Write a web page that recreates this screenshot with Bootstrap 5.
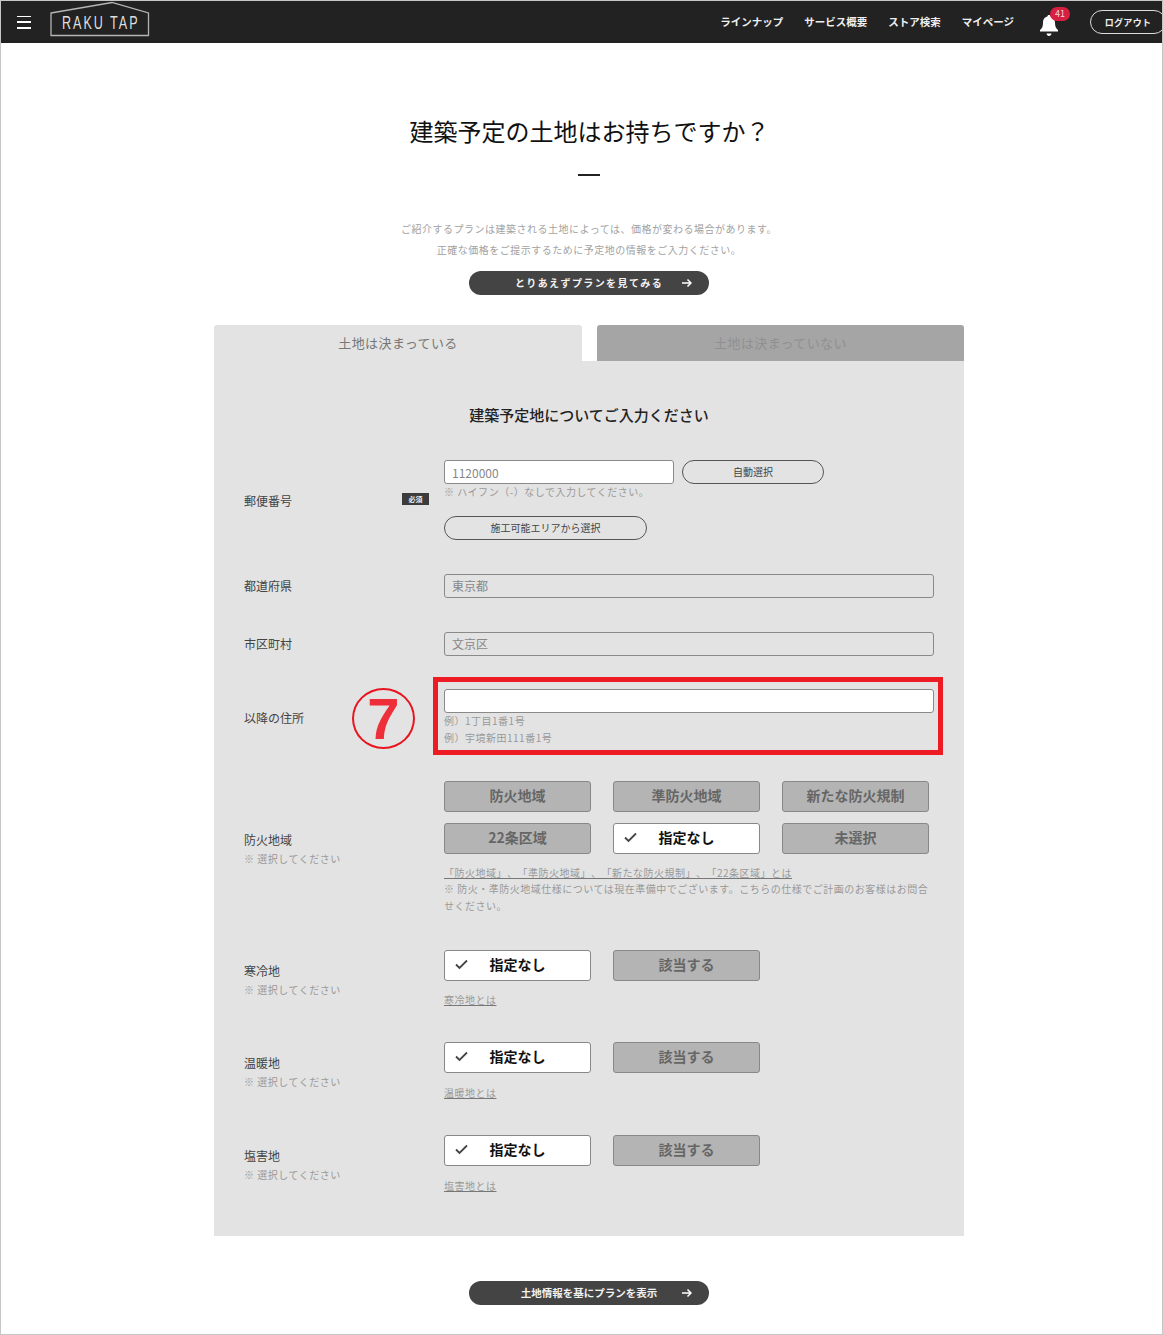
<!DOCTYPE html>
<html lang="ja">
  <head>
    <meta charset="UTF-8" />
    <title>建築予定の土地</title>
    <link href="https://cdn.jsdelivr.net/npm/bootstrap@5.3.0/dist/css/bootstrap.min.css" rel="stylesheet" />
    <style>
      html, body { height: 1335px; overflow: hidden; }
      body { font-family: "Noto Sans CJK JP", "Noto Sans", sans-serif; color: #333; background: #fff; text-spacing-trim: space-all; }
      .page-frame { height: 1335px; border: 1px solid #c6c6c6; overflow: hidden; }

      .top-bar { height: 42px; background: #222; padding: 0 0 0 16px; flex-wrap: nowrap; overflow: hidden; }
      .burger { width: 14px; height: 13px; padding: 0; border: 0; background: none; display: flex; flex-direction: column; justify-content: space-between; }
      .burger span { display: block; height: 1.5px; background: #fff; }
      .logo-mark { margin: 0 0 6px 19px; display: block; }
      .logo-mark text { font-family: "Liberation Sans", sans-serif; font-size: 18px; fill: #dedede; }
      .top-links { gap: 21px; font-size: 10.5px; font-weight: 700; margin-right: 26px; }
      .top-links a { color: #eee; text-decoration: none; }
      .bell-wrap { position: relative; width: 18px; height: 24px; margin-right: 32px; }
      .bell-count { position: absolute; top: -3px; left: 10px; width: 20px; height: 14px; padding: 0; font-size: 9px; font-weight: 400; line-height: 14px; background: #d81e41; color: #f3d5da; }
      .logout-btn { flex: 0 0 76px; width: 76px; height: 24px; margin-right: -4px; padding: 0; border: 1px solid #ddd; border-radius: 12px; background: none; color: #eee; font-size: 9px; font-weight: 700; line-height: 21px; letter-spacing: .3px; }

      .main-col { width: 750px; margin-left: 213px; }
      .page-title { margin: 71px 0 0; padding-left: 1px; font-size: 24px; font-weight: 400; line-height: 34px; color: #111; text-align: center; }
      .title-rule { width: 22px; height: 2px; margin: 26px auto 0; background: #222; }
      .lead-note { margin: 42px 0 0; font-size: 10px; letter-spacing: .5px; line-height: 21px; color: #a2a2a2; text-align: center; }
      .pill-go { position: relative; display: block; width: 240px; height: 24px; margin: 0 auto; padding: 0; border: 0; border-radius: 12px; background: #444; color: #f2f2f2; font-size: 10px; font-weight: 700; line-height: 24px; }
      .pill-go svg { position: absolute; right: 17px; top: 7px; }
      .go-first { margin-top: 11px; letter-spacing: 1.4px; }
      .go-last { margin-top: 45px; font-size: 10.5px; letter-spacing: 0; }

      .land-box { margin-top: 30px; }
      .land-tabs { gap: 15px; height: 36px; }
      .land-tab { flex: 1 1 0; font-size: 13px; letter-spacing: .4px; line-height: 36px; text-align: center; border-radius: 3px 3px 0 0; }
      .land-tab.on { flex: 0 0 368px; background: #e3e3e3; color: #777; }
      .land-tab.off { background: #a5a5a5; color: #909090; }
      .land-panel { height: 875px; padding: 43px 30px 0; background: #e3e3e3; }
      .panel-title { margin: 0 0 34px; font-size: 15px; font-weight: 500; line-height: 22px; color: #222; text-align: center; }

      .form-stack { gap: 34px; }
      .form-line { position: relative; display: flex; align-items: center; }
      .line-address { margin-top: -1px; }
      .line-fire { margin-top: 1px; }
      .line-cold { margin-top: 2px; }
      .line-warm { margin-top: 2px; }
      .line-salt { margin-top: 2px; }
      .label-col { position: relative; flex: 0 0 200px; font-size: 12px; line-height: 20px; color: #444; }
      .label-col.has-hint { padding-top: 3px; }
      .label-col.postal-label { padding-top: 2px; }
      .label-hint { font-size: 10px; line-height: 18px; color: #999; letter-spacing: .5px; }
      .must-tag { position: absolute; right: 15px; top: 4px; width: 27px; height: 12px; background: #3c3c3c; color: #eee; font-size: 7px; font-weight: 700; line-height: 12px; text-align: center; }
      .field-col { flex: 0 0 490px; width: 490px; }
      .land-input.form-control { height: 24px; min-height: 0; padding: 1px 7px 0; font-size: 12px; line-height: 18px; color: #888; background: #fff; border: 1px solid #8a8a8a; border-radius: 3px; box-shadow: none; }
      .land-input.form-control.is-locked { padding: 0 7px 1px; background: #e3e3e3; }
      .short-input { flex: 0 0 230px; width: 230px !important; }
      .pill-line { height: 24px; padding: 0 0 2px; border: 1px solid #555; border-radius: 12px; background: transparent; color: #444; font-size: 10px; line-height: 19px; }
      .pill-auto { flex: 0 0 142px; width: 142px; }
      .pill-area { display: block; width: 203px; margin-top: 16px; }
      .field-hint { font-size: 10px; letter-spacing: .5px; line-height: 17px; color: #999; }
      .hint-tight { margin-top: -1px; }
      .choice-grid { display: grid; grid-template-columns: repeat(3, 147px); column-gap: 22px; row-gap: 11px; }
      .choice-btn { position: relative; height: 31px; padding: 0 0 3px; border: 1px solid #888; border-radius: 3px; background: #b4b4b4; color: #666; font-size: 14px; font-weight: 700; line-height: 24px; }
      .choice-btn.picked { background: #fff; color: #111; }
      .choice-btn svg { position: absolute; left: 10px; top: 8px; }
      .choice-link { display: block; width: max-content; margin-top: 12px; font-size: 10px; letter-spacing: .5px; line-height: 13px; color: #999; text-decoration: underline; text-decoration-color: #777; }
      .line-warm .choice-link, .line-salt .choice-link { margin-top: 13px; }
      .note-line { margin-top: 1px; }

      .mark-box { position: absolute; left: 189px; right: -9px; top: -12px; bottom: -9px; border: 5px solid #ed1c24; pointer-events: none; }
      .mark-seven { position: absolute; left: 108px; top: -1px; width: 63px; height: 61px; border: 2.5px solid #e8141f; border-radius: 50%; color: #ee2e38; font-family: "Liberation Sans", sans-serif; font-size: 58px; font-weight: 700; line-height: 57px; text-align: center; }
    </style>
  </head>
  <body>
    <div class="page-frame">
      <nav class="navbar top-bar">
        <div class="d-flex align-items-center">
          <button class="burger" type="button" aria-label="menu"><span></span><span></span><span></span></button>
          <svg class="logo-mark" width="100" height="36" viewBox="0 0 100 36">
            <path d="M1 12 L62 1.500 L98.500 12 V34.500 H1 Z" fill="none" stroke="#b5b5b5" stroke-width="1.300" />
            <text transform="translate(12 28) scale(.7 1)" textLength="108" lengthAdjust="spacing">RAKU TAP</text>
          </svg>
        </div>
        <div class="d-flex align-items-center ms-auto">
          <div class="d-flex top-links">
            <a href="#">ラインナップ</a>
            <a href="#">サービス概要</a>
            <a href="#">ストア検索</a>
            <a href="#">マイページ</a>
          </div>
          <div class="bell-wrap">
            <svg width="18" height="24" viewBox="0 0 18 24">
              <path d="M9 2c1 0 1.600.6 1.700 1.500C14 4.300 15 7 15 10c0 3.500 1 5.500 3 7v1.500H0V17c2-1.500 3-3.500 3-7 0-3 1-5.700 4.300-6.500C7.400 2.600 8 2 9 2z" fill="#fff" />
              <path d="M6.500 20.500h5C11.300 22 10.300 23 9 23s-2.300-1-2.500-2.500z" fill="#fff" />
            </svg>
            <span class="badge rounded-pill bell-count">41</span>
          </div>
          <button class="logout-btn" type="button">ログアウト</button>
        </div>
      </nav>

      <div class="main-col">
        <h1 class="page-title">建築予定の土地はお持ちですか？</h1>
        <div class="title-rule"></div>
        <p class="lead-note">
          ご紹介するプランは建築される土地によっては、価格が変わる場合があります。<br />
          正確な価格をご提示するために予定地の情報をご入力ください。
        </p>
        <button class="pill-go go-first" type="button">
          とりあえずプランを見てみる
          <svg width="10" height="10" viewBox="0 0 10 10"><path d="M0 5h9M5.500 1.500 9 5 5.500 8.500" fill="none" stroke="#fff" stroke-width="1.500" /></svg>
        </button>

        <div class="land-box">
          <div class="d-flex land-tabs">
            <div class="land-tab on">土地は決まっている</div>
            <div class="land-tab off">土地は決まっていない</div>
          </div>
          <div class="land-panel">
            <h2 class="panel-title">建築予定地についてご入力ください</h2>
            <div class="d-flex flex-column form-stack">
              <div class="form-line">
                <div class="label-col postal-label">郵便番号<span class="must-tag">必須</span></div>
                <div class="field-col">
                  <div class="d-flex gap-2">
                    <input class="form-control land-input short-input" type="text" value="1120000" />
                    <button class="pill-line pill-auto" type="button">自動選択</button>
                  </div>
                  <div class="field-hint hint-tight">※ ハイフン（-）なしで入力してください。</div>
                  <button class="pill-line pill-area" type="button">施工可能エリアから選択</button>
                </div>
              </div>

              <div class="form-line">
                <div class="label-col">都道府県</div>
                <div class="field-col"><input class="form-control land-input is-locked" type="text" value="東京都" /></div>
              </div>

              <div class="form-line">
                <div class="label-col">市区町村</div>
                <div class="field-col"><input class="form-control land-input is-locked" type="text" value="文京区" /></div>
              </div>

              <div class="form-line line-address">
                <div class="label-col">以降の住所</div>
                <div class="field-col">
                  <input class="form-control land-input" type="text" />
                  <div class="field-hint hint-tight">例）1丁目1番1号</div>
                  <div class="field-hint">例）宇境新田111番1号</div>
                </div>
                <div class="mark-box"></div>
                <div class="mark-seven">7</div>
              </div>

              <div class="form-line line-fire">
                <div class="label-col has-hint">防火地域<div class="label-hint">※ 選択してください</div></div>
                <div class="field-col">
                  <div class="choice-grid">
                    <button class="choice-btn" type="button">防火地域</button>
                    <button class="choice-btn" type="button">準防火地域</button>
                    <button class="choice-btn" type="button">新たな防火規制</button>
                    <button class="choice-btn" type="button">22条区域</button>
                    <button class="choice-btn picked" type="button">
                      <svg width="13" height="11" viewBox="0 0 13 11"><path d="M1 5.500 4.500 9 12 1.500" fill="none" stroke="#444" stroke-width="1.800" /></svg>
                      指定なし
                    </button>
                    <button class="choice-btn" type="button">未選択</button>
                  </div>
                  <a class="choice-link" href="#">「防火地域」、「準防火地域」、「新たな防火規制」、「22条区域」とは</a>
                  <div class="field-hint note-line">※ 防火・準防火地域仕様については現在準備中でございます。こちらの仕様でご計画のお客様はお問合せください。</div>
                </div>
              </div>

              <div class="form-line line-cold">
                <div class="label-col has-hint">寒冷地<div class="label-hint">※ 選択してください</div></div>
                <div class="field-col">
                  <div class="choice-grid">
                    <button class="choice-btn picked" type="button">
                      <svg width="13" height="11" viewBox="0 0 13 11"><path d="M1 5.500 4.500 9 12 1.500" fill="none" stroke="#444" stroke-width="1.800" /></svg>
                      指定なし
                    </button>
                    <button class="choice-btn" type="button">該当する</button>
                  </div>
                  <a class="choice-link" href="#">寒冷地とは</a>
                </div>
              </div>

              <div class="form-line line-warm">
                <div class="label-col has-hint">温暖地<div class="label-hint">※ 選択してください</div></div>
                <div class="field-col">
                  <div class="choice-grid">
                    <button class="choice-btn picked" type="button">
                      <svg width="13" height="11" viewBox="0 0 13 11"><path d="M1 5.500 4.500 9 12 1.500" fill="none" stroke="#444" stroke-width="1.800" /></svg>
                      指定なし
                    </button>
                    <button class="choice-btn" type="button">該当する</button>
                  </div>
                  <a class="choice-link" href="#">温暖地とは</a>
                </div>
              </div>

              <div class="form-line line-salt">
                <div class="label-col has-hint">塩害地<div class="label-hint">※ 選択してください</div></div>
                <div class="field-col">
                  <div class="choice-grid">
                    <button class="choice-btn picked" type="button">
                      <svg width="13" height="11" viewBox="0 0 13 11"><path d="M1 5.500 4.500 9 12 1.500" fill="none" stroke="#444" stroke-width="1.800" /></svg>
                      指定なし
                    </button>
                    <button class="choice-btn" type="button">該当する</button>
                  </div>
                  <a class="choice-link" href="#">塩害地とは</a>
                </div>
              </div>
            </div>
          </div>
        </div>

        <button class="pill-go go-last" type="button">
          土地情報を基にプランを表示
          <svg width="10" height="10" viewBox="0 0 10 10"><path d="M0 5h9M5.500 1.500 9 5 5.500 8.500" fill="none" stroke="#fff" stroke-width="1.500" /></svg>
        </button>
      </div>
    </div>

    <script src="https://cdn.jsdelivr.net/npm/bootstrap@5.3.0/dist/js/bootstrap.bundle.min.js"></script>
  </body>
</html>
